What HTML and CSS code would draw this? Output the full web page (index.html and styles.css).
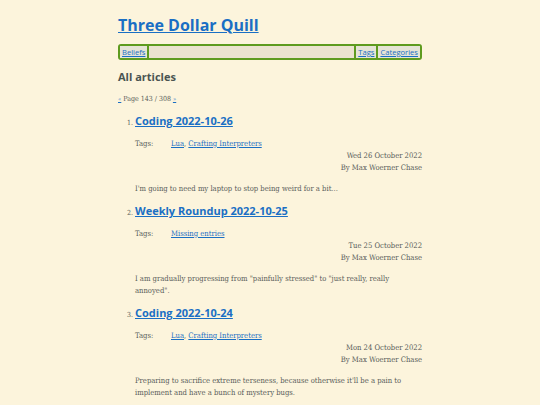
FILE: index.html
```html
<!DOCTYPE html>
<html>
<head>
<meta charset="utf-8">
<link rel="stylesheet" href="styles.css">
</head>
<body>
<div class="page">
  <header class="site-header">
    <h1 class="site-title"><a href="#">Three Dollar Quill</a></h1>
    <nav class="nav">
      <a class="nav-link" href="#">Beliefs</a>
      <span class="nav-spacer"></span>
      <a class="nav-link" href="#">Tags</a>
      <a class="nav-link" href="#">Categories</a>
    </nav>
  </header>
  <main>
    <h2 class="section-title">All articles</h2>
    <p class="pager"><a href="#">«</a> Page 143 / 308 <a href="#">»</a></p>
    <ol class="articles" start="1">
      <li class="article">
        <h3 class="article-title"><a href="#">Coding 2022-10-26</a></h3>
        <div class="tags"><span class="tags-label">Tags:</span><span><a href="#">Lua</a>, <a href="#">Crafting Interpreters</a></span></div>
        <div class="meta"><div>Wed 26 October 2022</div><div>By Max Woerner Chase</div></div>
        <p class="summary">I'm going to need my laptop to stop being weird for a bit...</p>
      </li>
      <li class="article">
        <h3 class="article-title"><a href="#">Weekly Roundup 2022-10-25</a></h3>
        <div class="tags"><span class="tags-label">Tags:</span><span><a href="#">Missing entries</a></span></div>
        <div class="meta"><div>Tue 25 October 2022</div><div>By Max Woerner Chase</div></div>
        <p class="summary">I am gradually progressing from "painfully stressed" to "just really, really annoyed".</p>
      </li>
      <li class="article">
        <h3 class="article-title"><a href="#">Coding 2022-10-24</a></h3>
        <div class="tags"><span class="tags-label">Tags:</span><span><a href="#">Lua</a>, <a href="#">Crafting Interpreters</a></span></div>
        <div class="meta"><div>Mon 24 October 2022</div><div>By Max Woerner Chase</div></div>
        <p class="summary">Preparing to sacrifice extreme terseness, because otherwise it'll be a pain to implement and have a bunch of mystery bugs.</p>
      </li>
    </ol>
  </main>
</div>
</body>
</html>
```

FILE: styles.css
```css
html, body {
  margin: 0;
  padding: 0;
  background: #fcf4dc;
}
body {
  font-family: "DejaVu Serif Condensed", "DejaVu Serif", serif;
  font-size: 7.6px;
  line-height: 12px;
  color: #585c5a;
}
a {
  color: #1a6fc4;
}
.page {
  width: 304px;
  margin: 0 auto;
  padding-top: 14px;
}
.site-title {
  margin: 0;
  font-family: "Open Sans", sans-serif;
  font-weight: 700;
  font-size: 16px;
  line-height: 22px;
}
.site-title a {
  color: #1a6fc4;
}
.nav {
  display: flex;
  margin-top: 8px;
  border: 2px solid #5e9b1f;
  border-radius: 3px;
  background: #ebe3cf;
  height: 12px;
  line-height: 12px;
  font-family: "Open Sans", sans-serif;
  font-size: 7.6px;
}
.nav-link {
  padding: 0 2px;
  background: #e5e4d6;
}
.nav-spacer {
  flex: 1;
  border-left: 2px solid #5e9b1f;
  border-right: 2px solid #5e9b1f;
}
.nav-link + .nav-link {
  border-left: 2px solid #5e9b1f;
}
.section-title {
  margin: 9px 0 0;
  font-family: "Open Sans", sans-serif;
  font-weight: 700;
  font-size: 11px;
  line-height: 16px;
  color: #4a5452;
}
.pager {
  margin: 8px 0 0;
  font-size: 7px;
}
.pager a {
  font-size: 6px;
}
.articles {
  margin: 6px 0 0;
  padding-left: 17px;
}
.article::marker {
  font-size: 7px;
  color: #585c5a;
}
.article-title {
  margin: 0;
  font-family: "Open Sans", sans-serif;
  font-weight: 700;
  font-size: 11px;
  line-height: 20px;
}
.tags {
  display: flex;
  margin-top: 7px;
}
.tags-label {
  width: 36px;
}
.meta {
  text-align: right;
}
.summary {
  margin: 9px 0 6px;
}
```
